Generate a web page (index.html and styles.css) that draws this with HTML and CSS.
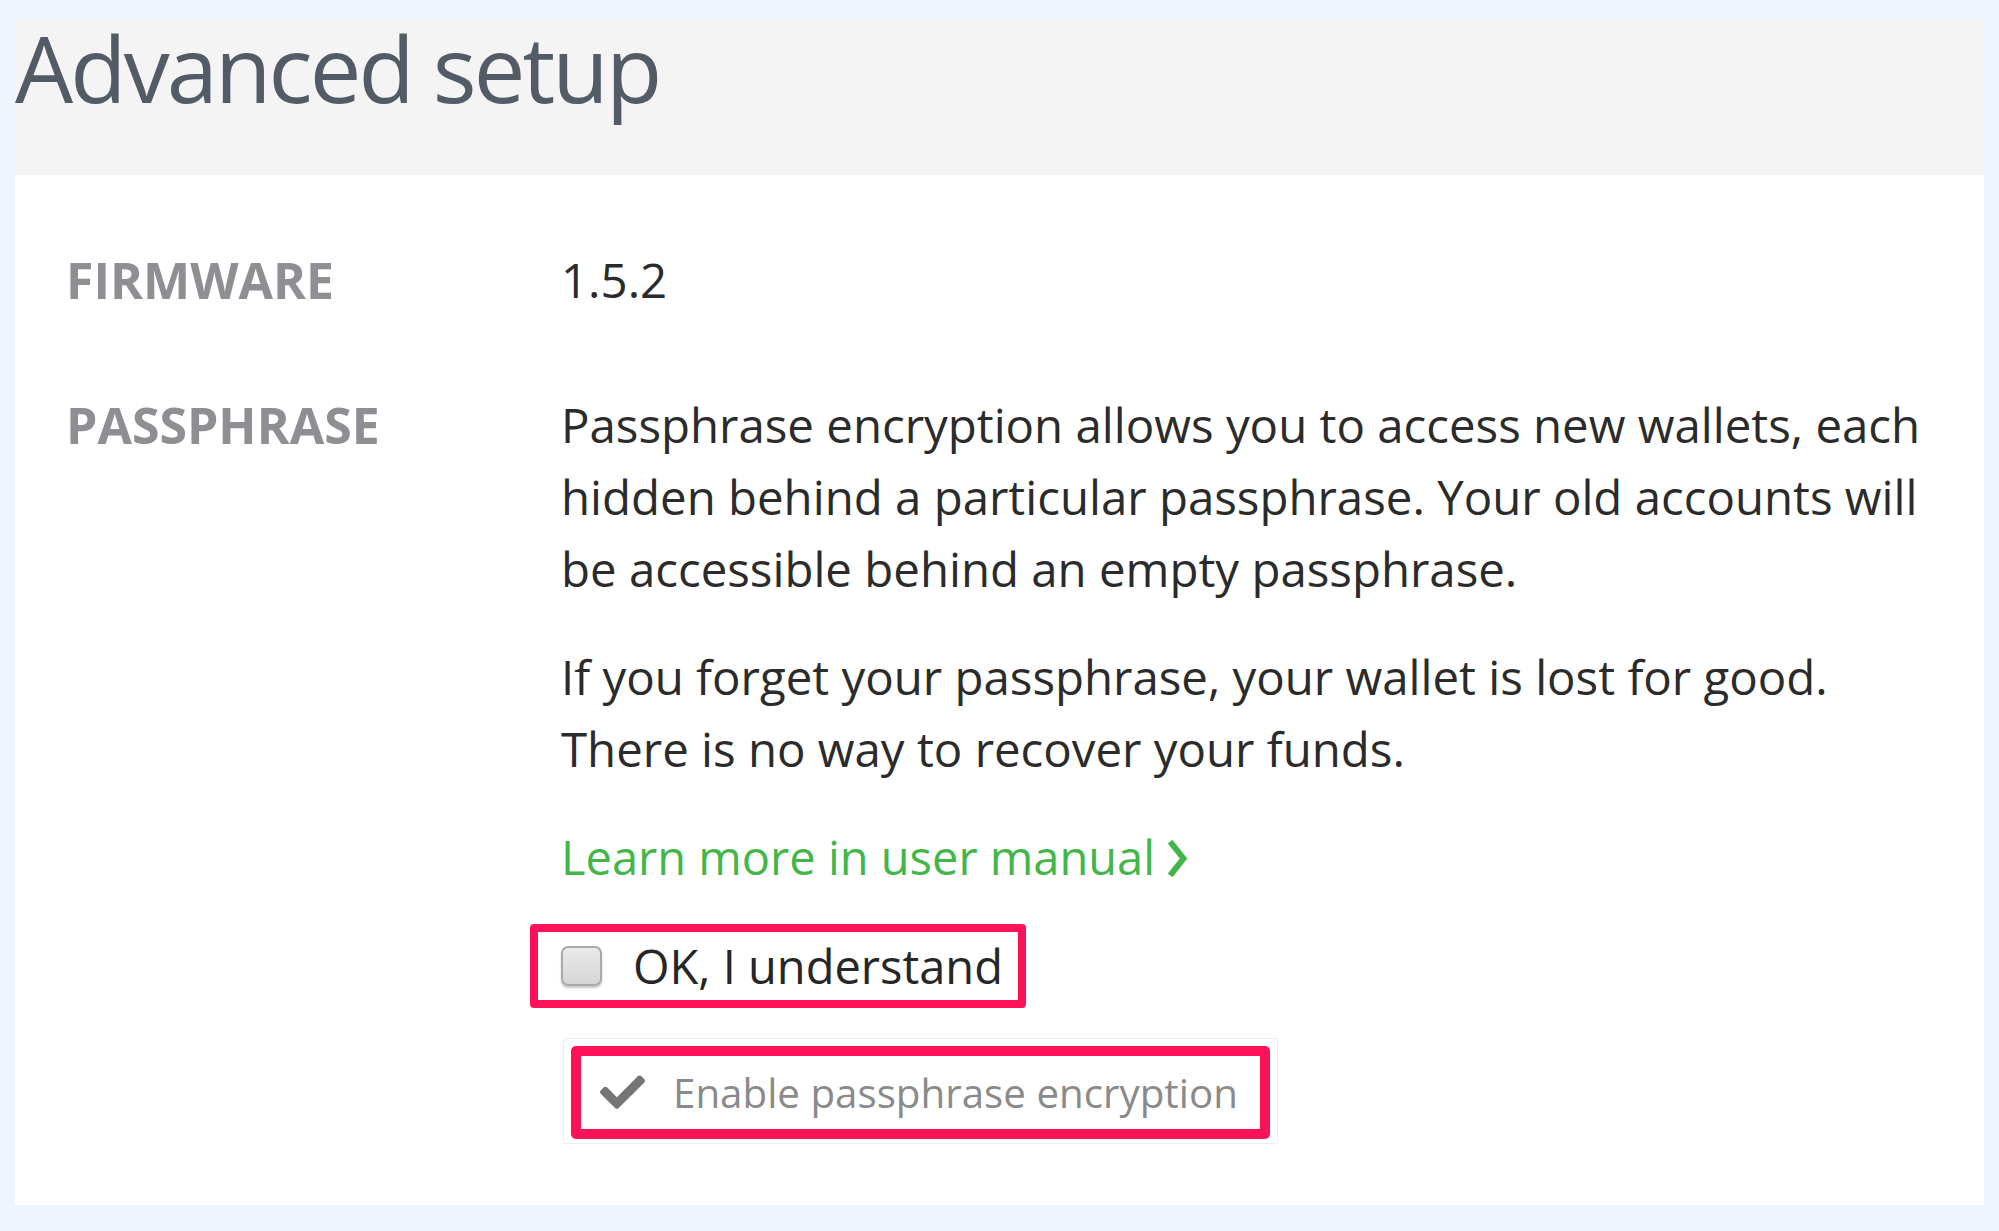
FILE: index.html
```html
<!DOCTYPE html>
<html lang="en">
<head>
<meta charset="utf-8">
<title>Advanced setup</title>
<link rel="stylesheet" href="styles.css">
</head>
<body>
<div class="page">
  <header class="head">
    <h1 class="title">Advanced setup</h1>
  </header>
  <main class="panel">
    <div class="row">
      <div class="label">FIRMWARE</div>
      <div class="value">1.5.2</div>
    </div>
    <div class="row">
      <div class="label">PASSPHRASE</div>
      <div class="value">
        <p class="para">Passphrase encryption allows you to access new wallets, each hidden behind a particular passphrase. Your old accounts will be accessible behind an empty passphrase.</p>
        <p class="para">If you forget your passphrase, your wallet is lost for good. There is no way to recover your funds.</p>
        <a class="link" href="#">Learn more in user manual<svg class="chev" viewBox="0 0 20 37" width="20" height="37" aria-hidden="true"><path d="M4 4 L15.5 18.5 L4 33" fill="none" stroke="#43b649" stroke-width="6" stroke-linecap="square" stroke-linejoin="miter"/></svg></a>
        <label class="confirm">
          <input class="box" type="checkbox">
          <span class="confirm-text">OK, I understand</span>
        </label>
        <button class="btn" type="button">
          <span class="btn-inner">
            <svg class="check" viewBox="0 64 512 390" width="45" height="35" aria-hidden="true"><path fill="#757575" d="M173.898 439.404l-166.4-166.4c-9.997-9.997-9.997-26.206 0-36.204l36.203-36.204c9.997-9.998 26.207-9.998 36.204 0L192 312.69 432.095 72.596c9.997-9.997 26.207-9.997 36.204 0l36.203 36.204c9.997 9.997 9.997 26.206 0 36.204l-294.4 294.401c-9.998 9.997-26.207 9.997-36.204-.001z"/></svg>
            <span class="btn-text">Enable passphrase encryption</span>
          </span>
        </button>
      </div>
    </div>
  </main>
</div>
</body>
</html>
```

FILE: styles.css
```css
* { box-sizing: border-box; }

html, body {
  margin: 0;
  padding: 0;
}

body {
  background: #eef5fc;
  font-family: "Open Sans", "Noto Sans", "Liberation Sans", sans-serif;
  color: #2b2b2b;
}

.page {
  padding: 20px 15px 27px 15px;
}

.head {
  background: #f4f4f4;
  height: 155px;
  padding-top: 2px;
}

.title {
  margin: 0;
  font-size: 92px;
  line-height: 92px;
  font-weight: 380;
  letter-spacing: -2.9px;
  color: #535b67;
}

.panel {
  background: #ffffff;
  padding: 69px 40px 61px 51px;
  display: flex;
  flex-direction: column;
  gap: 73px;
}

.row {
  display: grid;
  grid-template-columns: 495px 1370px;
}

.label {
  font-size: 50px;
  line-height: 72px;
  font-weight: 700;
  color: #8e8e93;
}

.value {
  font-size: 47.4px;
  line-height: 72px;
  color: #2b2b2b;
}

.para {
  margin: 0 0 36px 0;
}

.link {
  display: flex;
  align-items: center;
  gap: 13px;
  font-size: 47px;
  color: #43b649;
  text-decoration: none;
  line-height: 72px;
  margin-bottom: 31px;
}

.chev {
  display: block;
  margin-top: 2px;
}

.confirm {
  display: inline-flex;
  align-items: center;
  margin-left: -31px;
  border: 8px solid #fd1158;
  border-radius: 4px;
  padding: 2px 15px 2px 23px;
  height: 84px;
}

.box {
  appearance: none;
  -webkit-appearance: none;
  margin: 0 31px 0 0;
  width: 41px;
  height: 40px;
  border: 2px solid #a9a9a9;
  border-radius: 7px;
  background: linear-gradient(#e9e9e9, #d6d6d6);
  box-shadow: 0 2px 2px rgba(0, 0, 0, 0.22);
}

.confirm-text {
  font-size: 47px;
  line-height: 64px;
  color: #262626;
}

.btn {
  display: block;
  margin: 30px 0 0 2px;
  padding: 7px 7px 4px 7px;
  border: 1px solid #ececec;
  border-radius: 3px;
  background: #ffffff;
  font: inherit;
  cursor: pointer;
}

.btn-inner {
  display: flex;
  align-items: center;
  border: 10px solid #fd1158;
  border-radius: 5px;
  padding: 0 22px 0 19px;
  height: 93px;
}

.check {
  display: block;
  margin-right: 28px;
}

.btn-text {
  font-size: 40.3px;
  line-height: 73px;
  color: #8a8a8a;
}
```
